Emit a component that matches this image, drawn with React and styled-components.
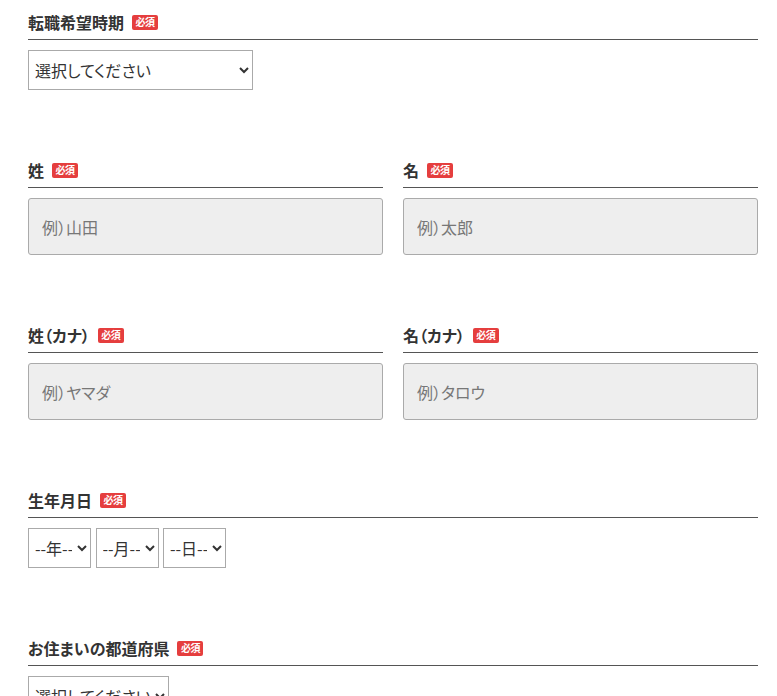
import React from 'react';
import styled, {createGlobalStyle} from 'styled-components';

const GlobalStyle = createGlobalStyle`
    body {
        margin: 0;
        background: #fff;
        font-family: "Noto Sans CJK JP", "Noto Sans", sans-serif;
        color: #333;
    }
`;

const App = () => {
    return(
        <>
            <GlobalStyle />
            <Form>
                <Section>
                    <Label text="転職希望時期" />
                    <Select $width={225} defaultValue="">
                        <option value="">選択してください</option>
                        <option>すぐにでも</option>
                        <option>3ヶ月以内</option>
                    </Select>
                </Section>

                <Row>
                    <Section>
                        <Label text="姓" />
                        <Input placeholder="例）山田" />
                    </Section>
                    <Section>
                        <Label text="名" />
                        <Input placeholder="例）太郎" />
                    </Section>
                </Row>

                <Row>
                    <Section>
                        <Label text="姓（カナ）" />
                        <Input placeholder="例）ヤマダ" />
                    </Section>
                    <Section>
                        <Label text="名（カナ）" />
                        <Input placeholder="例）タロウ" />
                    </Section>
                </Row>

                <Section>
                    <Label text="生年月日" />
                    <DateRow>
                        <Select $width={63} defaultValue="">
                            <option value="">--年--</option>
                        </Select>
                        <Select $width={63} defaultValue="">
                            <option value="">--月--</option>
                        </Select>
                        <Select $width={63} defaultValue="">
                            <option value="">--日--</option>
                        </Select>
                    </DateRow>
                </Section>

                <Section>
                    <Label text="お住まいの都道府県" />
                    <Select $width={141} defaultValue="">
                        <option value="">選択してください</option>
                        <option>東京都</option>
                    </Select>
                </Section>
            </Form>
        </>
    );
};

const Label = ({text}) => (
    <Heading>
        <span>{text}</span>
        <Badge>必須</Badge>
    </Heading>
);

const Form = styled.div`
    width: 730px;
    padding: 10px 0 0 28px;
    font-feature-settings: "palt";
`;

const Row = styled.div`
    display: grid;
    grid-template-columns: 1fr 1fr;
    column-gap: 20px;
`;

const Section = styled.div`
    margin-bottom: 68px;
`;

const Heading = styled.div`
    display: flex;
    align-items: center;
    height: 24px;
    line-height: 24px;
    padding-bottom: 5px;
    border-bottom: 1px solid #555;
    margin-bottom: 10px;
    font-size: 16px;
    font-weight: 700;
    color: #333;
`;

const Badge = styled.span`
    display: inline-flex;
    align-items: center;
    justify-content: center;
    width: 26px;
    height: 15px;
    margin-left: 8px;
    border-radius: 2px;
    background: #e53e3e;
    color: #fff;
    font-size: 10px;
    font-weight: 700;
    line-height: 1;
    letter-spacing: -0.5px;
`;

const Select = styled.select`
    display: block;
    width: ${({$width}) => $width}px;
    height: 40px;
    padding: 0 2px;
    border: 1px solid #aaa;
    border-radius: 0;
    background: #fff;
    color: #333;
    font-family: "Noto Sans CJK JP", "Noto Sans", sans-serif;
    font-feature-settings: "palt";
    font-size: 16px;
`;

const DateRow = styled.div`
    display: flex;
    gap: 4.5px;
`;

const Input = styled.input`
    display: block;
    box-sizing: border-box;
    width: 100%;
    height: 57px;
    padding: 0 13px;
    border: 1px solid #aaa;
    border-radius: 3px;
    background: #eee;
    font-family: "Noto Sans CJK JP", "Noto Sans", sans-serif;
    font-feature-settings: "palt";
    font-size: 16px;
    color: #333;

    &::placeholder {
        color: #777;
    }
`;

export default App;
